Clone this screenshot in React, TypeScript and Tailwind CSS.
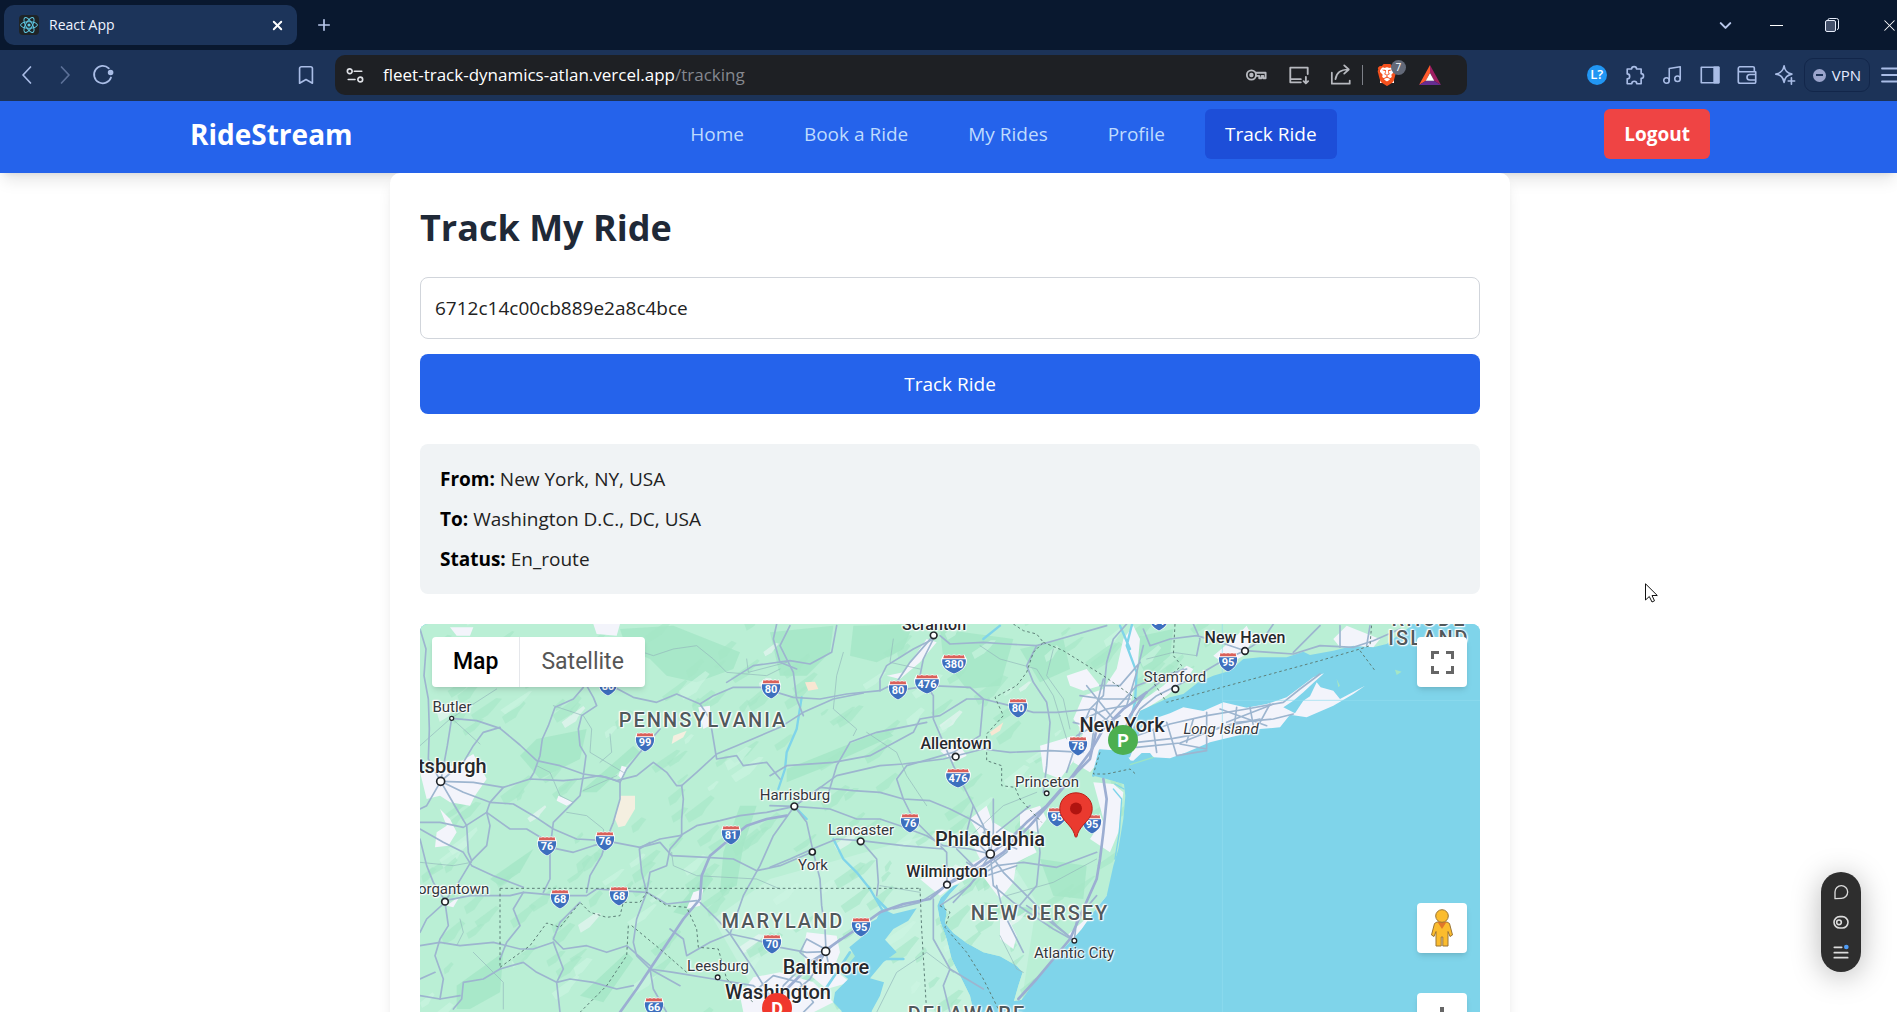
import React, { useState } from "react";
import { X, Plus, ChevronDown, Bookmark, Music } from "lucide-react";
import { SiBrave } from "react-icons/si";

/* ---------- browser chrome ---------- */

function ReactLogo() {
  return (
    <svg viewBox="0 0 20 20" className="size-5 rounded-sm bg-[#1f2427]" fill="none" stroke="#5fc9e4" strokeWidth="1">
      <ellipse cx="10" cy="10" rx="8.4" ry="3.3" />
      <ellipse cx="10" cy="10" rx="8.4" ry="3.3" transform="rotate(60 10 10)" />
      <ellipse cx="10" cy="10" rx="8.4" ry="3.3" transform="rotate(120 10 10)" />
      <circle cx="10" cy="10" r="1.6" fill="#5fc9e4" stroke="none" />
    </svg>
  );
}

function Glyph({ children, size = "size-6", width = 1.5 }: { children: React.ReactNode; size?: string; width?: number }) {
  return (
    <svg viewBox="0 0 24 24" className={size} fill="none" stroke="currentColor" strokeWidth={width} strokeLinecap="round" strokeLinejoin="round" aria-hidden="true">
      {children}
    </svg>
  );
}

function ChromeButton({ label, children, className = "w-[38px]" }: { label: string; children: React.ReactNode; className?: string }) {
  return (
    <button type="button" aria-label={label} className={`flex h-10 shrink-0 items-center justify-center ${className}`}>
      {children}
    </button>
  );
}

function TabStrip() {
  return (
    <div className="flex h-[50px] items-center bg-[#09182f] pl-1 text-[#b9c8ec]">
      <div className="flex h-10 w-[293px] items-center gap-2.5 rounded-[10px] bg-[#1c345a] pl-[15px] pr-2">
        <ReactLogo />
        <span className="grow text-sm text-[#eef3ff]">React App</span>
        <button type="button" aria-label="Close tab" className="flex size-6 items-center justify-center text-white">
          <X size={15} strokeWidth={3} />
        </button>
      </div>
      <ChromeButton label="New tab" className="ml-[9px] w-9">
        <Plus size={18} strokeWidth={2.2} />
      </ChromeButton>
      <div className="ml-auto -mr-[21px] flex items-center">
        <ChromeButton label="Search tabs" className="w-[46px]">
          <ChevronDown size={19} strokeWidth={2.6} />
        </ChromeButton>
        <ChromeButton label="Minimize" className="w-14">
          <span className="h-px w-[13px] bg-white" />
        </ChromeButton>
        <ChromeButton label="Restore" className="w-14">
          <svg viewBox="0 0 14 14" className="size-3.5" fill="none" stroke="#e6ecfa" aria-hidden="true">
            <rect x="0.5" y="2.5" width="10" height="11" rx="1.5" fill="#43506a" />
            <path d="M3 2.3V2a1.500 1.500 0 0 1 1.500-1.500h7a2 2 0 0 1 2 2v7.500a1.500 1.500 0 0 1-1.500 1.500" />
          </svg>
        </ChromeButton>
        <ChromeButton label="Close window" className="w-[58px] text-white">
          <X size={19} strokeWidth={1.3} />
        </ChromeButton>
      </div>
    </div>
  );
}

function AddressBar() {
  return (
    <div className="flex h-[51px] items-center bg-[#1c3358] pb-px pl-2 text-[#a9bde6]">
      <ChromeButton label="Back">
        <Glyph width={1.7}><path d="M15.500 4 8 12l7.500 8" /></Glyph>
      </ChromeButton>
      <ChromeButton label="Forward" className="w-[38px] text-[#5c7198]">
        <Glyph width={1.7}><path d="M8.500 4 16 12l-7.500 8" /></Glyph>
      </ChromeButton>
      <ChromeButton label="Reload">
        <Glyph width={1.8}>
          <path d="M20 14.500A8.700 8.700 0 1 1 17.800 5.300" />
          <circle cx="19.600" cy="9.500" r="1.900" fill="currentColor" />
        </Glyph>
      </ChromeButton>
      <ChromeButton label="Bookmark this page" className="ml-[163px] w-[42px]">
        <Bookmark size={22} strokeWidth={1.8} />
      </ChromeButton>
      <div className="ml-2 flex h-10 grow items-center rounded-[10px] bg-[#1e2024] pr-[18px] text-[#b7b9bf]">
        <ChromeButton label="Site information" className="w-10 text-[#dfe1e6]">
          <Glyph size="size-[18px]" width={2.2}>
            <circle cx="5" cy="7" r="3.200" />
            <path d="M11 7h10M3 18h9" />
            <circle cx="19" cy="18" r="3.200" />
          </Glyph>
        </ChromeButton>
        <a href="#tracking" className="ml-2 text-[17px] text-[#85888f]">
          <span className="text-white">fleet-track-dynamics-atlan.vercel.app</span>/tracking
        </a>
        <div className="ml-auto flex items-center">
          <ChromeButton label="Passwords" className="w-[44px]">
            <Glyph size="size-[22px]" width={2}>
              <circle cx="7" cy="12" r="5" />
              <circle cx="7" cy="12" r="1.400" fill="currentColor" />
              <path d="M12 9.500h10.500v6h-2.500v-2.500h-2v2.500h-2.500v-2.500H12" />
            </Glyph>
          </ChromeButton>
          <ChromeButton label="Install app" className="w-[42px]">
            <Glyph size="size-[22px]" width={2}>
              <path d="M14 20H2.500V4H21.500v7M2.500 16.500H14M19.500 14v7M17 18.700l2.500 2.500 2.500-2.500" />
            </Glyph>
          </ChromeButton>
          <ChromeButton label="Share" className="w-[42px]">
            <Glyph size="size-[22px]" width={1.9}>
              <path d="M2 9.500V21.500H21.500V18M6 16.500C7 9.500 12 6 20 6M15.500 1.500 20.500 6l-5 4.500" />
            </Glyph>
          </ChromeButton>
          <span className="h-5 w-px bg-[#7d8088]" />
          <ChromeButton label="Brave Shields" className="w-12">
            <span className="relative flex">
              <span className="absolute inset-x-1 inset-y-[3px] bg-white" />
              <SiBrave size={22} color="#f4511e" className="relative" />
              <span className="absolute -right-2 -top-1 flex size-[15px] items-center justify-center rounded-full bg-[#636978] text-[10px] text-white">7</span>
            </span>
          </ChromeButton>
          <ChromeButton label="Rewards" className="w-[38px]">
            <svg viewBox="0 0 22 20" className="h-5 w-[22px]" aria-hidden="true">
              <path d="M11 0 0 20 7 15.700 11 7.500z" fill="#ff5a2d" />
              <path d="M11 0 22 20 15 15.700 11 7.500z" fill="#9e1f63" />
              <path d="M0 20h22l-7-4.300H7z" fill="#662d91" />
              <path d="M11 8 15.200 15.700H6.800z" fill="#fff" />
            </svg>
          </ChromeButton>
        </div>
      </div>
      <div className="-mr-[15px] ml-[111px] flex items-center">
        <ChromeButton label="Language tool">
          <span className="flex size-5 items-center justify-center rounded-full bg-[#2196f3] text-[13px] font-semibold text-white">L?</span>
        </ChromeButton>
        <ChromeButton label="Extensions">
          <Glyph size="size-[22px]" width={1.8}>
            <path d="M3.500 5.500h4.800a2.700 2.700 0 1 1 5.400 0h5v5a2.600 2.600 0 1 1 0 5.200v5.800h-4.800a2.700 2.700 0 0 0-5.400 0H3.500v-5.300a2.700 2.700 0 0 0 0-5.400z" />
          </Glyph>
        </ChromeButton>
        <ChromeButton label="Media" className="w-[37px]">
          <Music size={22} strokeWidth={1.7} />
        </ChromeButton>
        <ChromeButton label="Sidebar">
          <Glyph size="size-[22px]" width={1.8}>
            <path d="M2.500 3.500h19v17h-19z" />
            <path d="M16.500 3.500h5v17h-5z" fill="currentColor" />
          </Glyph>
        </ChromeButton>
        <ChromeButton label="Wallet" className="w-[37px]">
          <Glyph size="size-[22px]" width={1.8}>
            <path d="M20 8V4.500a1.500 1.500 0 0 0-1.500-1.500H4a2 2 0 0 0-1.500 2v14a2 2 0 0 0 2 2h15.500a1.500 1.500 0 0 0 1.500-1.500V8.500H4.500a2 2 0 0 1-2-2M21.500 11.500H15a3 3 0 0 0 0 6h6.500" />
          </Glyph>
        </ChromeButton>
        <ChromeButton label="Assistant">
          <Glyph size="size-[22px]" width={1.8}>
            <path d="M11 2c.8 5.500 3 7.700 8.500 9-2.500.6-4.300 1.400-5.700 2.700-1.400 1.500-2.200 3.300-2.800 6.300-1.200-5.800-3.300-8-9-9 5.700-1.200 7.900-3.500 9-9zM19 15v7M15.500 18.500h7" />
          </Glyph>
        </ChromeButton>
        <button type="button" className="flex h-[34px] items-center gap-1.5 rounded-[9px] border border-[#12264a] px-2 text-[15px] text-[#e4ebff]">
          <span className="flex size-[13px] items-center justify-center rounded-full bg-[#9ba5cc]">
            <span className="h-0.5 w-[7px] bg-[#1c3358]" />
          </span>
          VPN
        </button>
        <ChromeButton label="Menu" className="w-[42px]">
          <Glyph width={1.8}><path d="M3 5.500h18M3 12h18M3 18.500h18" /></Glyph>
        </ChromeButton>
      </div>
    </div>
  );
}

/* ---------- site navigation ---------- */

const links = ["Home", "Book a Ride", "My Rides", "Profile", "Track Ride"];

function SiteNav() {
  return (
    <header className="bg-[#2563eb] pb-3.5 pl-[3px] pt-2 shadow-lg">
      <div className="mx-auto flex max-w-[1520px] items-center justify-between">
        <a href="#home" className="text-[28px] font-bold leading-[50px] text-white">RideStream</a>
        <nav className="ml-[50px] flex gap-5">
          {links.map((name) => (
            <a
              key={name}
              href={`#${name}`}
              className={`rounded-md px-5 text-[19px] leading-[50px] ${name === "Track Ride" ? "bg-[#1d4ed8] text-white" : "text-[#bfdbfe]"}`}
            >
              {name}
            </a>
          ))}
        </nav>
        <button type="button" className="h-[50px] rounded-md bg-[#ef4444] px-5 text-[19px] font-bold text-white">Logout</button>
      </div>
    </header>
  );
}

/* ---------- map drawing (three units to the pixel) ---------- */

const LAND =
  "M-20-20H2960L2975 20 2940 45 2900 75 2860 85 2800 80 2740 95 2670 108 2650 98 2600 115 2520 115 2470 120 2430 155 2380 170 2335 190 2290 225 2250 235 2205 255 2160 275 2150 300 2120 345 2100 400 2060 400 2040 420 2030 450 2020 470 2060 480 2112 496 2116 530 2110 600 2095 690 2080 740 2060 830 2020 880 1985 930 1950 970 1910 1010 1850 1080 1805 1142 1782 1146 1795 1100 1808 1060 1790 1040 1740 1012 1690 1000 1640 972 1600 942 1575 912 1580 880 1570 852 1590 825 1618 795 1600 800 1562 836 1552 860 1560 905 1580 960 1595 1020 1630 1090 1650 1130 1660 1176 1690 1260 1360 1700H-20Z";
const BAY =
  "M1385 868 1420 885 1490 868 1465 905 1420 930 1395 962 1430 1000 1390 1030 1350 1078 1392 1090 1380 1130 1355 1176 1370 1300 1380 1700H1240L1255 1300 1265 1176 1240 1150 1245 1120 1285 1080 1262 1062 1305 1012 1288 985 1340 942 1325 925 1370 900Z";
const LONG_ISLAND =
  "M2130 415 2150 360 2165 325 2200 300 2250 283 2290 265 2350 276 2410 250 2480 266 2540 255 2600 235 2640 205 2680 175 2712 163 2682 190 2650 220 2620 245 2590 265 2625 283 2650 245 2670 232 2690 190 2702 205 2740 215 2760 240 2835 200 2800 225 2740 260 2660 295 2610 287 2580 325 2520 330 2450 350 2370 370 2300 400 2250 418 2200 415 2190 402 2165 402 2140 425 2100 422Z";

const URBAN = [
  "M30 450 100 440 160 405 200 480 165 530 150 560 90 550 60 530 20 540 0 460Z",
  "M60 570 90 600 110 640 85 680 45 685 50 640 80 620Z",
  "M90 25 160 25 150 50 110 50Z",
  "M520 15 600 15 590 50 530 45Z",
  "M415 530 460 550 440 560 410 545Z",
  "M605 440 620 445 605 480 595 470Z",
  "M835 265 870 260 870 320 850 330Z",
  "M1080 1060 1000 1075 960 1130 970 1180 1180 1180 1240 1150 1180 1090Z",
  "M1160 940 1250 950 1260 1000 1240 1050 1290 1090 1220 1110 1160 1060 1150 990Z",
  "M1500 780 1600 760 1680 720 1660 680 1700 640 1720 610 1770 640 1830 660 1850 700 1790 730 1780 790 1740 840 1710 800 1680 760 1600 800 1560 830Z",
  "M1650 600 1700 560 1720 620 1680 650Z",
  "M1800 580 1860 560 1880 600 1850 640 1800 620Z",
  "M1940 170 2000 150 2040 200 1990 215 1950 200Z",
  "M1990 230 2050 210 2090 150 2110 60 2140 20 2160 60 2150 170 2130 260 2160 250 2230 200 2260 170 2300 140 2320 150 2300 180 2240 230 2160 280 2110 400 2060 400 2010 460 1960 430 1990 340 1960 300Z",
  "M2020 490 2080 495 2110 520 2095 640 2070 700 2010 660 2050 600Z",
  "M1860 380 1960 350 1980 400 1920 480 1870 460Z",
  "M1400 170 1450 160 1520 60 1550 70 1500 130 1440 180Z",
  "M1560 395 1620 380 1640 410 1600 430Z",
  "M1740 900 1760 890 1790 950 1780 990 1740 960Z",
  "M2060 830 2080 800 2040 880 1960 960 1940 950 2020 880Z",
  "M2380 110 2440 60 2480 20 2500 60 2470 110 2420 140Z",
  "M820 820 850 810 840 860 800 870Z",
  "M80 860 120 830 100 865Z",
  "M2740 60 2780 20 2880 60 2860 85 2760 85Z",
];

const FOREST = [
  "M600 30 760 20 860 60 960 100 940 150 830 190 740 170 690 120 620 90Z",
  "M1050 40 1240 20 1230 100 1160 170 1080 170Z",
  "M1300 20 1480 15 1450 90 1370 130 1290 110Z",
  "M1560 30 1780 60 1740 200 1640 210 1570 120Z",
  "M1800 90 1930 60 1950 150 1860 190Z",
  "M910 700 960 560 1010 560 970 680 950 800 900 820Z",
  "M300 410 350 360 500 330 480 420 360 480Z",
  "M210 780 340 690 300 760 240 800Z",
  "M480 520 640 380 660 400 530 520Z",
  "M1100 450 1400 330 1420 350 1200 450 1100 490Z",
  "M1860 720 2000 740 1990 840 1900 830Z",
  "M1690 850 1860 870 1860 900 1720 880Z",
  "M110 1100 250 1000 240 1120 150 1170 110 1170Z",
  "M480 1130 620 1000 640 1020 550 1150Z",
  "M760 880 860 760 880 780 800 890Z",
  "M2120 60 2260 30 2250 110 2180 170Z",
];

const ROADS = [
  "M0 30 18 90 12 170 25 240 28 330 25 420 62 487",
  "M95 298 82 380 62 487",
  "M95 298 170 305 240 328 300 378 350 425 420 440 490 465 560 475 600 490",
  "M240 325 190 340 160 380 130 430 70 480",
  "M490 205 460 240 405 265 385 320 367 360 360 410 342 460 330 480",
  "M500 200 520 235 530 260 485 290 475 330 480 380 498 410 490 470 480 530 430 580 400 610 395 650 385 670",
  "M62 487 160 490 250 505 330 480 430 485 480 480 540 470 590 485 650 470 700 430 740 460 770 500 785 500",
  "M785 500 830 460 890 405 950 380 1080 325 1150 280 1240 240 1330 222",
  "M575 200 640 235 710 250 770 225 840 255 880 230 940 205 1020 205 1120 235 1200 240 1280 225 1380 215 1430 190 1470 130 1540 50",
  "M840 255 870 300 880 360 890 420 950 410 970 440 1040 430 1080 480",
  "M920 190 1000 140 1110 125 1170 135 1235 100 1250 20",
  "M1070 15 1060 60 1080 130 1130 150",
  "M600 490 600 540 580 610 560 660 545 710 510 770 500 820",
  "M720 330 660 400 620 450 600 490",
  "M62 487 110 570 140 620 145 700 155 725 110 800 75 845",
  "M62 487 20 560 0 570",
  "M0 610 60 610 130 625 200 580 210 550 250 505",
  "M0 630 70 670 130 700 155 740 220 770 310 805",
  "M0 660 20 740 40 790 75 845",
  "M62 487 130 520 210 550 280 555 340 590 400 630 470 660 555 665 660 685 720 660 780 650 830 620 900 605 960 590 1040 580 1123 562",
  "M200 580 270 630 320 630 370 660 390 685 460 700 520 680 560 670",
  "M390 690 390 780 370 820",
  "M75 845 150 830 270 830 310 820 420 830 500 830 530 810 600 815 680 820 740 855 830 845",
  "M785 500 790 540 785 600 785 650 750 690 740 740 690 760 680 820 650 900 640 970 650 1010 690 1050",
  "M690 670 658 690 665 760 680 820",
  "M660 685 720 670 755 710 860 715 940 720 1010 755 1080 740 1177 699",
  "M1123 562 1060 650 1020 740 970 830 930 945",
  "M840 850 900 910 930 945 1000 960 1080 985 1160 1000 1218 998",
  "M930 945 1000 1050 1050 1130",
  "M480 850 420 910 400 960 430 990 500 980 560 1000 620 980 690 1040",
  "M690 1050 760 1060 880 1080 1000 1100 1070 1160",
  "M690 1050 700 1110 740 1180M690 1050 780 1100",
  "M310 820 280 870 300 920 260 970 240 1020",
  "M0 980 60 970 120 980 220 970 300 990 340 990 400 970",
  "M75 850 20 900 0 940M75 850 85 920 60 960 45 1010 70 1080 60 1140",
  "M0 1080 45 1060M0 1130 60 1140 120 1130",
  "M240 1050 190 1080 130 1090 125 1140 100 1170",
  "M240 1050 310 1030 350 1060 410 1090 430 1050 400 970",
  "M410 1090 450 1080 520 1090 590 1110 640 1100M410 1090 420 1180",
  "M155 725 200 680 210 620 200 580",
  "M750 930 790 960 800 1010 870 970 930 945",
  "M1110 20 1080 80 1120 160 1130 240 1150 290",
  "M1050 470 1100 440 1240 430 1350 410 1480 340 1500 300 1560 290 1640 240 1690 240",
  "M1220 540 1250 440 1290 370 1370 340 1520 310",
  "M1560 50 1590 75 1690 70 1760 75 1850 80 1920 60 2060 20",
  "M1540 60 1510 120 1500 170 1540 230 1540 300 1570 370 1600 440 1650 540 1690 620 1711 700",
  "M1380 215 1380 180 1400 140 1480 90 1540 60",
  "M1430 215 1530 200 1650 205 1690 240 1770 260 1840 280 1910 280 2020 270",
  "M1123 562 1250 470 1380 440 1450 435 1570 420 1690 390 1770 400 1890 395 1990 400",
  "M1123 562 1200 505 1300 515 1380 520 1450 540 1530 545 1590 570 1650 600 1711 640",
  "M1050 560 1123 562 1230 570 1310 600 1380 600 1440 620 1520 650 1570 680 1650 690 1711 705",
  "M1123 562 1160 610 1180 700 1200 780 1205 860 1215 930 1218 995",
  "M1050 745 1110 720 1177 690 1250 660 1322 665 1450 680 1570 690",
  "M1322 665 1370 720 1375 790 1370 830",
  "M1450 540 1430 480 1460 440 1600 400 1680 350 1690 240M1450 540 1480 600 1540 660 1580 700 1581 797",
  "M1850 80 1820 140 1840 190 1880 250 1890 310 1880 440 1870 520",
  "M1660 560 1640 640 1720 720M1720 540 1720 640 1711 705",
  "M1711 705 1750 760 1840 850 1910 920 1963 965",
  "M1730 740 1810 730 1910 745 2030 700",
  "M1540 840 1540 960 1590 1050 1570 1100 1590 1180M1590 1050 1690 1110",
  "M1600 850 1670 775 1730 740M1730 800 1750 880 1810 1000",
  "M1711 705 1640 760 1500 850 1420 870M1711 705 1650 800 1560 860",
  "M1711 705 1720 800 1780 850 1900 930 1963 965",
  "M1850 600 1860 700 1850 800 1790 870M1730 640 1830 560",
  "M1640 730 1700 770 1790 740M1610 690 1680 760 1760 700 1790 640M1690 640 1790 690",
  "M1215 990 1160 960 1140 1000 1200 1050M1218 998 1260 960M1218 998 1230 1060",
  "M1218 998 1150 1040 1090 1100 1073 1150M1218 998 1170 1080 1110 1130",
  "M1000 1120 1060 1070 1140 1090 1180 1150 1150 1180",
  "M1963 965 1880 900 1820 860M1963 965 1970 900 2030 830",
  "M2010 270 1980 340 1960 400 1940 460M2050 180 2030 260 2020 340 2010 420",
  "M2010 270 2050 230 2060 130 2080 60 2120 15M2020 270 2080 320 2130 330 2180 310",
  "M1980 230 2050 240 2130 240M1990 300 2060 270 2120 260M2000 200 2080 300 2100 350",
  "M1960 310 2040 330 2100 290M1970 350 2060 300 2150 200M2040 200 2100 200 2160 130M2120 260 2150 160 2170 80",
  "M2130 320 2160 270 2210 230 2270 200 2340 165 2400 130 2440 110 2475 95 2550 100 2620 105 2700 80 2800 85 2860 65 2940 30",
  "M2130 290 2180 220 2230 180 2290 150M2150 200 2230 170 2300 150",
  "M2170 30 2190 80 2250 60 2330 50 2400 70 2475 95M2320 15 2340 60 2330 110M2475 95 2530 60 2560 15M2620 100 2700 20M2760 85 2760 20M2840 80 2850 20",
  "M2150 350 2250 315 2360 290 2480 270 2590 250 2640 210 2700 165",
  "M2150 370 2260 358 2360 340 2450 310 2560 300 2620 285",
  "M2150 385 2280 372 2400 325 2520 300M2280 375 2360 390 2360 280M2450 265 2440 345M2490 265 2500 320M2550 255 2520 310",
  "M2240 310 2270 410 2360 395M2200 330 2210 400M2320 300 2300 370M2400 270 2540 320M2420 310 2560 255",
];

const TRUNKS = [
  "M1100 590 1040 600 980 620 930 660 870 710 845 770 840 840 790 900 750 960 690 1050 650 1110 600 1180",
  "M1215 995 1250 970 1310 930 1380 880 1450 855 1530 840 1580 797 1650 750 1711 705 1770 660 1820 610 1880 560 1950 480 2010 400 2050 330 2110 270 2180 220",
  "M1581 797 1690 740 1750 700 1830 620 1900 540 1970 460 2010 420 2030 330",
  "M2050 480 2060 540 2050 640 2040 720 2030 780 1990 870 1950 960 1850 1080 1795 1140",
  "M1218 998 1160 1050 1100 1110 1050 1170",
  "M2130 400 2110 350 2130 290 2170 230",
];

const LANES = [
  "M640 90 700 110 760 90 830 80 880 120 920 160 1040 170 1080 150",
  "M400 260 430 270 490 290 515 330 510 400 560 430 610 460",
  "M0 380 90 300 230 210M95 298 180 375",
  "M350 440 390 460 420 530 460 550",
  "M440 580 500 590 550 630 555 660M490 515 590 470",
  "M0 730 100 740 155 730M570 345 575 400 540 430",
  "M755 700 760 740 830 770 1010 780 1080 810",
  "M1270 100 1250 170 1240 270 1310 330 1300 350",
  "M1420 60 1410 130 1500 150M1340 340 1430 400 1460 470 1520 560",
  "M1680 80 1740 120 1850 150 1900 230 1940 360",
  "M1900 90 1880 170 1930 240 1950 330",
  "M1740 950 1790 1050 1810 1060M1380 800 1500 820M1620 680 1750 560 1850 520",
  "M1370 1180 1430 1060 1520 1000 1600 1060M1760 830 1900 790 2030 720",
  "M120 900 130 940 110 980M160 1000 200 1040 250 1090 250 1170",
  "M980 120 985 160 1100 130M2180 120 2260 100 2330 110",
];

const RIVERS = [
  "M1145 235 1130 330 1100 400 1095 450 1075 510M1240 660 1270 720 1310 760 1350 810 1385 870M1123 562 1160 600",
  "M2140 0 2120 80 2150 160 2145 250 2120 345M2100 20 2130 90M1690 60 1740 20",
];

const BORDERS = [
  "M240 808H1500M240 808V1045M240 1045 330 980 380 912 420 925 480 850 510 880 560 895 600 890 610 850 660 850 680 820 740 860 800 865 830 930 835 985 895 990 920 1080 1000 1150",
  "M635 920 720 990 800 1060M625 920 620 1010 560 1100 480 1180",
  "M1500 808 1505 930 1520 1180",
  "M1780 15 1810 35 1850 45 1870 70 1840 100 1820 160 1790 200 1725 235 1750 290 1700 345 1700 425 1745 440 1745 500 1785 505 1800 540 1865 610M1870 70 1930 95 2050 170 2150 240",
  "M1560 860 1590 880 1575 925 1640 1000 1690 1080 1740 1180",
  "M2265 15 2260 110 2285 140 2250 170 2200 190 2240 250 2700 125 2820 90 2850 80 2855 15M2820 95 2865 155",
  "M2040 400 2020 465 2060 465 2130 450 2150 468",
];

const TOWNS: [number, number, number][] = [
  [95, 298, 6], [62, 487, 12], [75, 848, 10], [893, 1075, 7], [1123, 562, 10], [1322, 667, 10], [1177, 699, 9],
  [1607, 413, 10], [1880, 523, 7], [1711, 705, 12], [1581, 797, 10], [1963, 965, 7], [1217, 997, 12], [1541, 49, 10],
  [2266, 210, 10], [2475, 96, 10],
];

function fieldPatches() {
  let seed = 7;
  const next = () => {
    seed = (seed * 16807) % 2147483647;
    return seed / 2147483647;
  };
  return Array.from({ length: 330 }, (_, i) => {
    const x = Math.round(next() * 2500);
    const y = Math.round(next() * 1250);
    const w = Math.round(15 + next() * 75);
    const h = Math.round(4 + next() * 13);
    const k = Math.round(next() * 10);
    return {
      d: `M${x} ${y}l${w} ${-Math.round(w * 0.65) - k} ${h} ${k} ${-Math.round(w / 3)} ${Math.round(w * 0.4)} ${-h} ${h + k} ${-Math.round(w / 2)} ${Math.round(w * 0.3)}z`,
      fill: i % 5 === 0 ? "#cdf5e2" : i % 17 === 0 ? "#eef5f6" : "#a5e6c6",
    };
  });
}
const PATCHES = fieldPatches();

function MapDrawing() {
  return (
    <svg viewBox="0 0 3180 1680" className="absolute inset-0 size-full" fill="none" strokeLinejoin="round" strokeLinecap="round" aria-hidden="true">
      <defs>
        <clipPath id="land"><path d={LAND} /></clipPath>
      </defs>
      <rect width="3180" height="1680" fill="#7fd4ea" />
      <g transform="translate(0 -15)">
        <path d={LAND} fill="#baefd5" />
        <g clipPath="url(#land)">
          <path d="M1050 780 1550 640 1720 640 1850 850 1800 1180H1040L880 900Z" fill="#c6f2de" />
          {FOREST.map((d) => <path key={d} d={d} fill="#a4e6c5" fillOpacity="0.8" />)}
          {PATCHES.map((p) => <path key={p.d} d={p.d} fill={p.fill} fillOpacity="0.6" />)}
          <path d="M600 530 645 530 645 570 615 620 595 625 585 600Z" fill="#f4efe0" />
          <path d="M760 350 800 335 790 355 755 375Z" fill="#f4efe0" />
          <path d="M1155 190 1185 188 1195 210 1165 215Z" fill="#f8e6d2" />
          <path d="M1710 340 1750 310 1740 335 1715 350Z" fill="#f8e6d2" />
          {URBAN.map((d) => <path key={d} d={d} fill="#f3f4fb" />)}
        </g>
        <path d={LONG_ISLAND} fill="#f3f4fb" />
        <path d="M2925 152 2945 158 2930 168ZM2750 180 2760 200 2755 205Z" fill="#a4e6c5" />
        <path d="M2130 437 2200 415" stroke="#9be4c4" strokeWidth="4" />
        <path d={BAY} fill="#7fd4ea" />
        <path d="M1385 1020 1450 1020M1290 1000 1210 1120M1400 870 1370 840M2040 395 2110 400 2130 430 2100 450 2040 450 2020 470Z" stroke="#7fd4ea" strokeWidth="8" fill="#7fd4ea" />
        <path d="M2085 495 2112 510M2080 510 2105 540 2098 640 2085 720" stroke="#7fd4ea" strokeWidth="4" />
        {RIVERS.map((d) => <path key={d} d={d} stroke="#7fd4ea" strokeWidth="7" />)}
        {LANES.map((d) => <path key={d} d={d} stroke="#93b7bb" strokeWidth="2" />)}
        {ROADS.map((d) => <path key={d} d={d} stroke="#9db5cf" strokeWidth="5" />)}
        {TRUNKS.map((d) => <path key={d} d={d} stroke="#9caed2" strokeWidth="8" />)}
        {BORDERS.map((d) => <path key={d} d={d} stroke="#5d7f78" strokeWidth="3" strokeDasharray="8 8" strokeLinecap="butt" />)}
        <path d="M2407 15V1700M2407 244H3180" stroke="#93dcee" strokeWidth="2" />
        {TOWNS.map(([x, y, r]) => <circle key={`${x}-${y}`} cx={x} cy={y} r={r} fill="#fff" stroke="#22262b" strokeWidth={r > 8 ? 5 : 4} />)}
      </g>
    </svg>
  );
}

const SHIELDS: [string, number, number][] = [
  ["80", 188, 62], ["99", 225, 118], ["76", 127, 222], ["76", 185, 217], ["81", 311, 211], ["68", 140, 275], ["68", 199, 272],
  ["66", 234, 383], ["70", 352, 320], ["80", 351, 65], ["80", 478, 66], ["476", 507, 60], ["380", 534, 40], ["80", 598, 84],
  ["78", 658, 122], ["476", 538, 154], ["76", 490, 199], ["95", 637, 193], ["95", 672, 200], ["95", 441, 303], ["95", 808, 38], ["91", 739, -3],
];

function Shield({ route, x, y }: { route: string; x: number; y: number }) {
  const wide = route.length > 2;
  return (
    <div className="absolute -translate-x-1/2 -translate-y-1/2" style={{ left: x, top: y }}>
      <svg viewBox="0 0 20 20" preserveAspectRatio="none" className={wide ? "h-5 w-[26px]" : "h-5 w-5"} aria-hidden="true">
        <path d="M2 .500Q4 1.500 6 .300 8 1.500 10 .300 12 1.500 14 .300 16 1.500 18 .500L19.800 5C20.500 13 16 17.500 10 20 4 17.500-.500 13 .200 5Z" fill="#fff" />
        <path d="M2.500 1Q4 2 6 1 8 2 10 1 12 2 14 1 16 2 17.500 1L18.300 4.200H1.700Z" fill="#d9605a" />
        <path d="M1 5.200H19C20 12.500 15.500 17 10 19.500 4.500 17 0 12.500 1 5.200Z" fill="#3d6fbe" />
      </svg>
      <span className="absolute inset-x-0 top-[5px] text-center text-[11px] font-bold leading-3 text-white">{route}</span>
    </div>
  );
}

type Kind = "town" | "city" | "metro" | "state" | "isle";
const LABELS: [string, number, number, Kind][] = [
  ["Butler", 32, 83, "town"], ["Pittsburgh", 20, 142, "metro"], ["Morgantown", 27, 265, "town"], ["PENNSYLVANIA", 283, 96, "state"],
  ["Harrisburg", 375, 171, "town"], ["Lancaster", 441, 206, "town"], ["York", 393, 241, "town"], ["Allentown", 536, 120, "city"],
  ["Princeton", 627, 158, "town"], ["Philadelphia", 570, 215, "metro"], ["Wilmington", 527, 248, "city"], ["NEW JERSEY", 620, 289, "state"],
  ["Atlantic City", 654, 329, "town"], ["Baltimore", 406, 343, "metro"], ["MARYLAND", 363, 297, "state"], ["Washington", 358, 368, "metro"],
  ["Leesburg", 298, 342, "town"], ["DELAWARE", 547, 390, "state"], ["Scranton", 514, 1, "city"], ["New York", 702, 101, "metro"],
  ["Long Island", 801, 105, "isle"], ["Stamford", 755, 53, "town"], ["New Haven", 825, 14, "city"], ["RHODE", 1009, -5, "state"], ["ISLAND", 1009, 14, "state"],
];
const LABEL_STYLE: Record<Kind, string> = {
  town: "text-[15px] text-[#33373c]",
  city: "text-base font-medium text-[#26292d]",
  metro: "text-[20px] font-medium text-[#26292d]",
  state: "text-[20px] font-medium tracking-widest text-[#51595c]",
  isle: "text-[15px] italic text-[#33373c]",
};

function RouteMap() {
  const [view, setView] = useState("Map");
  const control = "flex size-[50px] items-center justify-center rounded-sm bg-white shadow-md";
  return (
    <section aria-label="Route map" className="relative mt-[30px] h-[560px] overflow-hidden rounded-lg bg-[#7fd4ea] font-['Roboto',sans-serif]">
      <div className="relative mx-auto h-full w-[1060px]">
        <MapDrawing />
        {SHIELDS.map(([route, x, y]) => <Shield key={`${route}-${x}`} route={route} x={x} y={y} />)}
        {LABELS.map(([name, x, y, kind]) => (
          <span
            key={name}
            className={`absolute -translate-x-1/2 -translate-y-1/2 whitespace-nowrap leading-5 [text-shadow:0_0_2px_#fff,0_0_2px_#fff,0_0_3px_#fff,1px_1px_1px_#fff,-1px_-1px_1px_#fff] ${LABEL_STYLE[kind]}`}
            style={{ left: x, top: y }}
          >
            {name}
          </span>
        ))}
        <span className="absolute left-[688px] top-[101px] flex size-[30px] items-center justify-center rounded-full bg-[#4caf50] text-[18px] font-bold text-white">P</span>
        <span className="absolute left-[342px] top-[369px] flex size-[30px] items-center justify-center rounded-full bg-[#f0382c] text-[18px] font-bold text-white">D</span>
        <svg viewBox="0 0 34 46" className="absolute left-[639px] top-[168px] h-[46px] w-[34px]" aria-hidden="true">
          <path d="M17 .800C7.500.800.800 8 .800 16.500c0 7.500 4.500 11.500 9 16.500 3.500 4 5.500 7.500 6.200 11.300.2 1.200 1.800 1.200 2 0 .7-3.800 2.700-7.300 6.200-11.300 4.500-5 9-9 9-16.500C33.200 8 26.500.800 17 .800z" fill="#ea3a2f" stroke="#b8201a" />
          <circle cx="17" cy="16.500" r="6" fill="#b01410" />
        </svg>
      </div>
      <div className="absolute left-3 top-[13px] flex overflow-hidden rounded-sm bg-white text-[23px] leading-[50px] shadow-md">
        {["Map", "Satellite"].map((name) => (
          <button
            key={name}
            type="button"
            aria-pressed={view === name}
            onClick={() => setView(name)}
            className={`px-[21px] ${view === name ? "font-medium text-black" : "border-l border-gray-200 text-[#565656]"}`}
          >
            {name}
          </button>
        ))}
      </div>
      <div className="absolute right-[13px] top-[13px] flex flex-col">
        <button type="button" aria-label="Toggle fullscreen" className={control}>
          <svg viewBox="0 0 23 23" className="size-[23px]" fill="none" stroke="#666" strokeWidth="3" aria-hidden="true">
            <path d="M1.500 8V1.500H8M15 1.500h6.500V8M21.500 15v6.500H15M8 21.500H1.500V15" />
          </svg>
        </button>
        <button type="button" aria-label="Street View" className={`mt-[216px] ${control}`}>
          <svg viewBox="0 0 22 38" className="h-[38px] w-[22px]" fill="#fbbc2e" stroke="#9a7434" strokeWidth="1" aria-hidden="true">
            <path d="M6 13h10l2.500 1.500L21.500 26l-2.500 1.500-2-5V37h-5.200v-9h-1.600v9H5V22.500l-2 5L.500 26l3-11.500z" />
            <path d="M6.500 13h9L11 20z" fill="#e0762a" stroke="none" />
            <circle cx="11" cy="7" r="6.300" />
          </svg>
        </button>
        <button type="button" aria-label="Zoom in" className={`mt-10 ${control}`}>
          <svg viewBox="0 0 22 22" className="size-[22px]" aria-hidden="true">
            <path d="M9 0h4v9h9v4h-9v9H9v-9H0V9h9z" fill="#666" />
          </svg>
        </button>
      </div>
    </section>
  );
}

/* ---------- page ---------- */

const details = [
  ["From:", "New York, NY, USA"],
  ["To:", "Washington D.C., DC, USA"],
  ["Status:", "En_route"],
];

function TrackingCard() {
  const [rideId, setRideId] = useState("6712c14c00cb889e2a8c4bce");
  return (
    <main className="pl-[3px]">
      <div className="mx-auto max-w-[1120px] rounded-[10px] bg-white p-[30px] shadow-lg">
        <h1 className="text-[36px] font-bold leading-[50px] text-[#1f2937]">Track My Ride</h1>
        <form onSubmit={(e) => e.preventDefault()} className="mt-6 flex flex-col gap-[15px] text-[19px]">
          <input
            aria-label="Ride ID"
            value={rideId}
            onChange={(e) => setRideId(e.target.value)}
            className="h-[62px] rounded-lg border border-[#d1d5db] px-3.5 text-[#222]"
          />
          <button type="submit" className="h-[60px] rounded-lg bg-[#2563eb] text-white">Track Ride</button>
        </form>
        <div className="mt-[30px] flex flex-col gap-2.5 rounded-lg bg-[#f0f3f5] p-5 text-[19px] leading-[30px] text-[#222]">
          {details.map(([term, value]) => (
            <p key={term}><strong className="font-bold text-black">{term}</strong> {value}</p>
          ))}
        </div>
        <RouteMap />
      </div>
    </main>
  );
}

function FloatingToolbar() {
  return (
    <div className="absolute bottom-10 right-9 flex w-10 flex-col items-center gap-1.5 rounded-full bg-[#2e2e2e] py-2 text-[#dcdcdc] shadow-[0_4px_30px_rgba(0,0,0,0.28)]">
      <button type="button" aria-label="Comments" className="flex size-6 items-center justify-center">
        <Glyph size="size-4" width={2}><path d="M3 22V12a9.500 9.500 0 1 1 9.500 9.500z" /></Glyph>
      </button>
      <button type="button" aria-label="Toggle flags" className="flex size-6 items-center justify-center">
        <Glyph size="size-4" width={2.4}><rect x="1.500" y="4" width="21" height="17" rx="8.500" /><circle cx="9" cy="12.500" r="3.500" /></Glyph>
      </button>
      <button type="button" aria-label="Toolbar menu" className="flex size-6 items-center justify-center">
        <Glyph size="size-4" width={2.6}>
          <path d="M2 5h11M2 13h20M2 20.500h20" />
          <circle cx="20" cy="4.500" r="3.500" fill="#4f9cf5" stroke="none" />
        </Glyph>
      </button>
    </div>
  );
}

export default function App() {
  return (
    <div className="relative h-screen overflow-hidden bg-white font-['Open_Sans',sans-serif]">
      <TabStrip />
      <AddressBar />
      <SiteNav />
      <TrackingCard />
      <FloatingToolbar />
      <svg viewBox="0 0 13 20" className="pointer-events-none absolute left-[1645px] top-[583px] h-5 w-[13px]" aria-hidden="true">
        <path d="M.500 .800V17L4.300 13.500 7 19l2.500-1.200L7 12.500h5.300z" fill="#fff" stroke="#111" />
      </svg>
    </div>
  );
}
